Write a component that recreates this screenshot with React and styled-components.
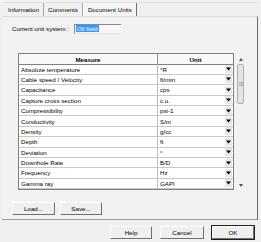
import React from 'react';
import styled, { createGlobalStyle } from 'styled-components';

const rows = [
    ['Absolute temperature', '°R'],
    ['Cable speed / Velocity', 'ft/min'],
    ['Capacitance', 'cps'],
    ['Capture cross section', 'c.u.'],
    ['Compressibility', 'psi-1'],
    ['Conductivity', 'S/m'],
    ['Density', 'g/cc'],
    ['Depth', 'ft'],
    ['Deviation', '°'],
    ['Downhole Rate', 'B/D'],
    ['Frequency', 'Hz'],
    ['Gamma ray', 'GAPI'],
];

const GlobalStyle = createGlobalStyle`
    html, body {
        margin: 0;
        padding: 0;
        background: #f0f0f0;
    }
    body {
        font-family: "Liberation Sans", Arial, sans-serif;
        font-size: 6.2px;
        color: #000;
    }
`;

const Window = styled.div`
    display: flex;
    flex-direction: column;
    width: 261px;
    height: 242px;
    box-sizing: border-box;
    padding: 2px 3px 0 2px;
    background: #f0f0f0;
`;

const TabStrip = styled.div`
    display: flex;
    height: 13px;
    padding-left: 2px;
    border-top: 1px solid #e2e2e2;
`;

const Tab = styled.div`
    display: flex;
    align-items: center;
    padding: 0 4px;
    height: 13px;
    box-sizing: border-box;
    background: ${props => (props.$active ? '#f4f4f4' : 'transparent')};
    border-right: 1px solid ${props => (props.$active ? '#707070' : '#a8a8a8')};
    border-left: ${props => (props.$active ? '1px solid #ffffff' : 'none')};
`;

const Panel = styled.div`
    display: flex;
    flex-direction: column;
    height: 204px;
    box-sizing: border-box;
    border-top: 1px solid #dcdcdc;
    border-right: 1px solid #6a6a6a;
    border-bottom: 1px solid #9a9a9a;
    padding: 6px 0 0 10px;
    background: #f2f2f2;
`;

const FieldRow = styled.div`
    display: flex;
    align-items: center;
    height: 11px;
`;

const Label = styled.span`
    width: 62px;
`;

const TextBox = styled.div`
    display: flex;
    align-items: center;
    width: 47px;
    height: 10px;
    box-sizing: border-box;
    padding-left: 1px;
    border-top: 1px solid #8a8a8a;
    border-left: 1px solid #8a8a8a;
    border-bottom: 1px solid #e0e0e0;
    background: #f8f8f8;
`;

const Selected = styled.span`
    background: #3399ff;
    color: #fff;
    line-height: 7px;
    padding: 0 1px;
`;

const TableArea = styled.div`
    display: flex;
    align-items: flex-start;
    gap: 3px;
    margin: 19px 0 0 6px;
`;

const Table = styled.div`
    display: grid;
    grid-template-columns: 139px 75px;
    grid-auto-rows: 10.4px;
    border: 1px solid #808080;
    background: #fff;
`;

const HeadCell = styled.div`
    display: flex;
    align-items: center;
    justify-content: center;
    height: 10px;
    font-weight: bold;
    background: #f8f8f8;
    border-right: ${props => (props.$last ? 'none' : '1px solid #909090')};
    border-bottom: 1px solid #808080;
`;

const Cell = styled.div`
    display: flex;
    align-items: center;
    padding-left: 2px;
    box-sizing: border-box;
    border-right: ${props => (props.$last ? 'none' : '1px solid #b8b8b8')};
    border-bottom: 1px solid #c8c8c8;
    white-space: nowrap;
`;

const UnitText = styled.span`
    flex: 1;
`;

const DropButton = styled.div`
    display: flex;
    align-items: center;
    justify-content: center;
    width: 7px;
    height: 8px;
    margin-right: 1px;
    background: #e8e8e8;
`;

const ScrollBar = styled.div`
    display: flex;
    flex-direction: column;
    align-items: center;
    width: 7px;
    height: 136px;
    margin-top: 1px;
`;

const Arrow = styled.div`
    display: flex;
    align-items: center;
    justify-content: center;
    height: 10px;
    width: 7px;
`;

const Track = styled.div`
    flex: 1;
    width: 7px;
    display: flex;
    flex-direction: column;
`;

const Thumb = styled.div`
    display: flex;
    align-items: center;
    justify-content: center;
    height: 40px;
    box-sizing: border-box;
    border: 1px solid #b0b0b0;
    border-radius: 2px;
    background: #e4e4e4;
`;

const ButtonRow = styled.div`
    display: flex;
    gap: 5px;
    margin-top: 12px;
`;

const Button = styled.div`
    display: flex;
    align-items: center;
    justify-content: center;
    width: ${props => props.$w}px;
    height: 13px;
    box-sizing: border-box;
    background: #efefef;
    border-top: 1px solid #ffffff;
    border-left: 1px solid #ffffff;
    border-right: 1px solid #707070;
    border-bottom: 1px solid #707070;
    outline: ${props => (props.$default ? '1px solid #202020' : 'none')};
    outline-offset: 0;
`;

const Footer = styled.div`
    display: flex;
    justify-content: flex-end;
    gap: 8px;
    padding: 6px 4px 0 0;
`;

const DownTriangle = () => (
    <svg width="5" height="4" viewBox="0 0 5 4">
        <path d="M0 0.5 H5 L2.5 3.5 Z" fill="#000" />
    </svg>
);

const Grip = () => (
    <svg width="4" height="4" viewBox="0 0 4 4">
        <path d="M0 0.5 H4 M0 2 H4 M0 3.5 H4" stroke="#888" strokeWidth="0.6" />
    </svg>
);

const App = () => (
    <>
        <GlobalStyle />
        <Window>
            <TabStrip>
                <Tab>Information</Tab>
                <Tab>Comments</Tab>
                <Tab $active>Document Units</Tab>
            </TabStrip>
            <Panel>
                <FieldRow>
                    <Label>Current unit system :</Label>
                    <TextBox>
                        <Selected>Oil field</Selected>
                    </TextBox>
                </FieldRow>
                <TableArea>
                    <Table>
                        <HeadCell>Measure</HeadCell>
                        <HeadCell $last>Unit</HeadCell>
                        {rows.map(([measure, unit]) => (
                            <React.Fragment key={measure}>
                                <Cell>{measure}</Cell>
                                <Cell $last>
                                    <UnitText>{unit}</UnitText>
                                    <DropButton>
                                        <DownTriangle />
                                    </DropButton>
                                </Cell>
                            </React.Fragment>
                        ))}
                    </Table>
                    <ScrollBar>
                        <Arrow>
                            <svg width="4" height="3" viewBox="0 0 4 3">
                                <path d="M0 3 H4 L2 0 Z" fill="#555" />
                            </svg>
                        </Arrow>
                        <Track>
                            <Thumb>
                                <Grip />
                            </Thumb>
                        </Track>
                        <Arrow>
                            <svg width="4" height="3" viewBox="0 0 4 3">
                                <path d="M0 0 H4 L2 3 Z" fill="#555" />
                            </svg>
                        </Arrow>
                    </ScrollBar>
                </TableArea>
                <ButtonRow>
                    <Button $w={43}>Load...</Button>
                    <Button $w={42}>Save...</Button>
                </ButtonRow>
            </Panel>
            <Footer>
                <Button $w={42}>Help</Button>
                <Button $w={44}>Cancel</Button>
                <Button $w={42} $default>OK</Button>
            </Footer>
        </Window>
    </>
);

export default App;
